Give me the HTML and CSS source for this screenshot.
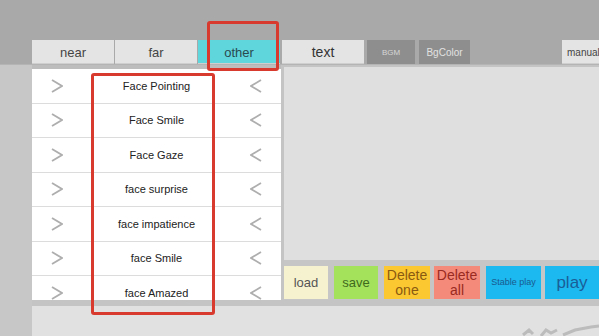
FILE: index.html
```html
<!DOCTYPE html>
<html>

<head>
    <meta charset="UTF-8">
    <title>Motion Editor</title>
    <link rel="stylesheet" href="styles.css">
</head>

<body>
    <div class="topbar"></div>
    <div class="tabbar">
        <div class="tab">near</div>
        <div class="tab">far</div>
        <div class="tab active">other</div>
        <div class="tab text-tab">text</div>
        <div class="tab dark bgm">BGM</div>
        <div class="tab dark bgcolor">BgColor</div>
        <div class="spacer"></div>
        <div class="tab manual">manual</div>
    </div>
    <div class="main">
        <div class="gutter"></div>
        <div class="content">
            <div class="upper">
                <div class="list">
                    <div class="row"><span class="arrow"><svg viewBox="0 0 12 14" width="12" height="14"><polyline points="1,1 11,7 1,13" /></svg></span><span class="label">Face Pointing</span><span class="arrow"><svg viewBox="0 0 12 14" width="12" height="14"><polyline points="11,1 1,7 11,13" /></svg></span></div>
                    <div class="row"><span class="arrow"><svg viewBox="0 0 12 14" width="12" height="14"><polyline points="1,1 11,7 1,13" /></svg></span><span class="label">Face Smile</span><span class="arrow"><svg viewBox="0 0 12 14" width="12" height="14"><polyline points="11,1 1,7 11,13" /></svg></span></div>
                    <div class="row"><span class="arrow"><svg viewBox="0 0 12 14" width="12" height="14"><polyline points="1,1 11,7 1,13" /></svg></span><span class="label">Face Gaze</span><span class="arrow"><svg viewBox="0 0 12 14" width="12" height="14"><polyline points="11,1 1,7 11,13" /></svg></span></div>
                    <div class="row"><span class="arrow"><svg viewBox="0 0 12 14" width="12" height="14"><polyline points="1,1 11,7 1,13" /></svg></span><span class="label">face surprise</span><span class="arrow"><svg viewBox="0 0 12 14" width="12" height="14"><polyline points="11,1 1,7 11,13" /></svg></span></div>
                    <div class="row"><span class="arrow"><svg viewBox="0 0 12 14" width="12" height="14"><polyline points="1,1 11,7 1,13" /></svg></span><span class="label">face impatience</span><span class="arrow"><svg viewBox="0 0 12 14" width="12" height="14"><polyline points="11,1 1,7 11,13" /></svg></span></div>
                    <div class="row"><span class="arrow"><svg viewBox="0 0 12 14" width="12" height="14"><polyline points="1,1 11,7 1,13" /></svg></span><span class="label">face Smile</span><span class="arrow"><svg viewBox="0 0 12 14" width="12" height="14"><polyline points="11,1 1,7 11,13" /></svg></span></div>
                    <div class="row"><span class="arrow"><svg viewBox="0 0 12 14" width="12" height="14"><polyline points="1,1 11,7 1,13" /></svg></span><span class="label">face Amazed</span><span class="arrow"><svg viewBox="0 0 12 14" width="12" height="14"><polyline points="11,1 1,7 11,13" /></svg></span></div>
                </div>
                <div class="right">
                    <div class="canvas"></div>
                    <div class="buttons">
                        <button class="btn load">load</button>
                        <button class="btn save">save</button>
                        <button class="btn del-one">Delete<br>one</button>
                        <button class="btn del-all">Delete<br>all</button>
                        <button class="btn stable">Stable play</button>
                        <button class="btn play">play</button>
                    </div>
                </div>
            </div>
            <div class="sep"></div>
            <div class="lower">
                <svg class="doodle" viewBox="0 0 80 16" width="80" height="16">
                    <path d="M4 15 L10 10 L14 14 M22 16 L27 10 L32 13 L38 10 M44 15 L56 10 L72 7 L80 6" />
                </svg>
            </div>
        </div>
    </div>

    <div class="mark mark-tab"></div>
    <div class="mark mark-list"></div>
</body>

</html>
```

FILE: styles.css
```css
body {
    margin: 0;
    width: 599px;
    height: 336px;
    overflow: hidden;
    background: #c6c6c6;
    font-family: "Liberation Sans", Arial, sans-serif;
    position: relative;
}

.topbar {
    height: 40px;
    background: #a9a9a9;
}

.tabbar {
    display: flex;
    height: 24px;
    padding-left: 32px;
    gap: 1px;
    background: #a9a9a9;
    border-bottom: 1px solid #b4b4b4;
}

.tab {
    width: 82px;
    display: flex;
    align-items: center;
    justify-content: center;
    background: #e4e4e4;
    color: #444;
    font-size: 13px;
    box-shadow: inset 0 -1px 0 #cfcfcf;
}

.tab.active {
    background: #5fd6dc;
    color: #2a4a50;
}

.tab.text-tab {
    margin-left: 1px;
    color: #333;
    font-size: 14px;
}

.tab.dark {
    background: #8e8e8e;
    box-shadow: none;
    color: #d6d6d6;
}

.tab.bgm {
    width: 48px;
    margin-left: 2px;
    font-size: 8px;
}

.tab.bgcolor {
    width: 51px;
    margin-left: 3px;
    font-size: 10px;
    color: #e2e2e2;
}

.spacer {
    flex: 1;
}

.tab.manual {
    width: 37px;
    justify-content: flex-start;
    padding-left: 5px;
    box-sizing: border-box;
    font-size: 10px;
    overflow: hidden;
    white-space: nowrap;
}

.main {
    display: flex;
    height: 271px;
}

.gutter {
    width: 32px;
    background: #c7c7c7;
}

.content {
    flex: 1;
    display: flex;
    flex-direction: column;
}

.upper {
    display: flex;
    height: 235px;
}

.list {
    width: 249px;
    padding-top: 4px;
    background: #bdbdbd;
    overflow: hidden;
    border-right: 3px solid #c4c4c4;
}

.row {
    display: flex;
    align-items: center;
    height: 34.5px;
    box-sizing: border-box;
    background: #fff;
    border-bottom: 1px solid #dcdcdc;
}

.arrow {
    width: 50px;
    display: flex;
    justify-content: center;
}

.arrow svg {
    fill: none;
    stroke: #aeaeae;
    stroke-width: 1.8;
}

.label {
    flex: 1;
    text-align: center;
    font-size: 11px;
    color: #222;
}

.right {
    flex: 1;
    display: flex;
    flex-direction: column;
    border-top: 2px solid #c4c4c4;
}

.canvas {
    flex: 1;
    background: #dfdfdf;
}

.buttons {
    height: 40px;
    box-sizing: border-box;
    display: flex;
    padding: 6px 0 1px 0;
    background: #c6c6c6;
}

.btn {
    border: none;
    padding: 0;
    font-family: inherit;
    font-size: 13px;
    line-height: 15px;
    width: 44px;
    margin-right: 6px;
}

.load {
    background: #f6f2d0;
    color: #555;
}

.save {
    background: #a5e25c;
    color: #3f6a1c;
}

.del-one {
    width: 46px;
    margin-right: 4px;
    font-size: 14px;
    background: #fbc832;
    color: #8a5a10;
}

.del-all {
    width: 46px;
    font-size: 14px;
    background: #f48a7a;
    color: #9a2b22;
}

.stable {
    width: 55px;
    margin-right: 4px;
    background: #1cb8f0;
    color: #1a5a8e;
    font-size: 9px;
}

.play {
    flex: 1;
    margin-right: 0;
    background: #1cb8f0;
    color: #1a5e98;
    font-size: 17px;
}

.sep {
    height: 6px;
    background: #c4c4c4;
}

.lower {
    flex: 1;
    background: #e1e1e1;
    display: flex;
    justify-content: flex-end;
    align-items: flex-end;
}

.doodle {
    fill: none;
    stroke: #bcbcbc;
    stroke-width: 3;
}

.mark {
    position: absolute;
    border: 3px solid #d93a2e;
    border-radius: 3px;
    box-sizing: border-box;
}

.mark-tab {
    left: 207px;
    top: 21px;
    width: 72px;
    height: 50px;
}

.mark-list {
    left: 91px;
    top: 73px;
    width: 124px;
    height: 242px;
}
```
